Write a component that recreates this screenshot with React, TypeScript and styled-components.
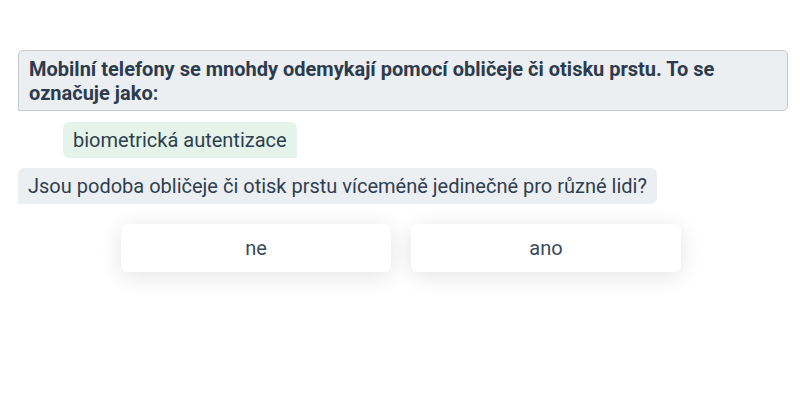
import React from "react";
import styled, { createGlobalStyle } from "styled-components";

const Global = createGlobalStyle`
  html, body { margin: 0; padding: 0; background: #ffffff; }
  body { font-family: Roboto, "Noto Sans", Arial, sans-serif; }
`;

const Page = styled.div`
  width: 800px;
  height: 400px;
  box-sizing: border-box;
  padding: 50px 12px 0 18px;
  display: flex;
  flex-direction: column;
  align-items: flex-start;
`;

const Prompt = styled.div`
  align-self: stretch;
  box-sizing: border-box;
  background: #eceff1;
  border: 1px solid #c5c9cd;
  border-radius: 5px 5px 5px 0;
  padding: 6px 10px 5px;
  font-size: 20px;
  line-height: 24px;
  font-weight: 700;
  color: #2c3b4d;
`;

const Bubble = styled.div<{ $variant: "answer" | "question" }>`
  box-sizing: border-box;
  padding: 6px 10px;
  font-size: 20px;
  line-height: 24px;
  color: #2f3e50;
  background: ${(p) => (p.$variant === "answer" ? "#e5f4eb" : "#eceff1")};
  border-radius: ${(p) => (p.$variant === "answer" ? "6px 6px 0 6px" : "6px 6px 6px 0")};
  margin-left: ${(p) => (p.$variant === "answer" ? "45px" : "0")};
  margin-top: ${(p) => (p.$variant === "answer" ? "11px" : "10px")};
`;

const Choices = styled.div`
  align-self: stretch;
  margin-top: 20px;
  display: flex;
  justify-content: center;
  gap: 20px;
  padding-right: 4px;
`;

const Choice = styled.button`
  width: 270px;
  height: 48px;
  border: none;
  border-radius: 6px;
  background: #ffffff;
  box-shadow: 0 4px 22px rgba(0, 0, 0, 0.11);
  font-family: Roboto, "Noto Sans", Arial, sans-serif;
  font-size: 20px;
  color: #3a4a5e;
  cursor: pointer;
`;

export default function App() {
  return (
    <>
      <Global />
      <Page>
        <Prompt>
          Mobilní telefony se mnohdy odemykají pomocí obličeje či otisku prstu. To se označuje jako:
        </Prompt>
        <Bubble $variant="answer">biometrická autentizace</Bubble>
        <Bubble $variant="question">
          Jsou podoba obličeje či otisk prstu víceméně jedinečné pro různé lidi?
        </Bubble>
        <Choices>
          <Choice>ne</Choice>
          <Choice>ano</Choice>
        </Choices>
      </Page>
    </>
  );
}
